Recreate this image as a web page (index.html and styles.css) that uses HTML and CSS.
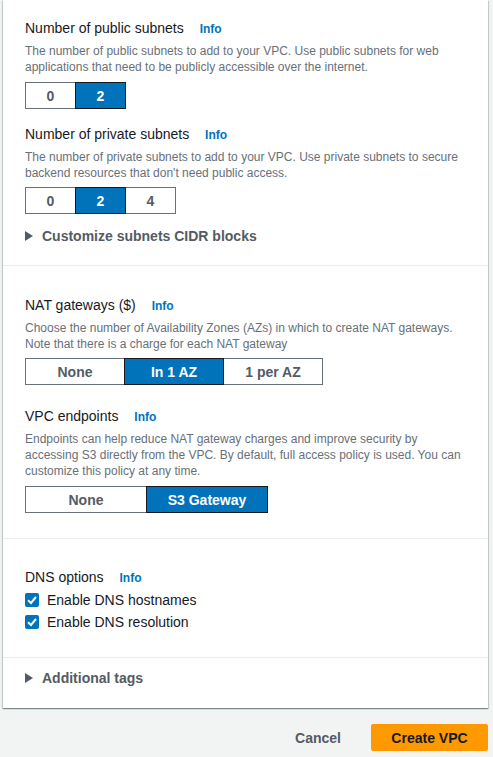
FILE: index.html
```html
<!DOCTYPE html>
<html>
<head>
<meta charset="utf-8">
<link rel="stylesheet" href="styles.css">
</head>
<body>
<div class="card">
  <div class="section s1">
    <div class="field">
      <div class="label">Number of public subnets <a class="info">Info</a></div>
      <div class="desc">The number of public subnets to add to your VPC. Use public subnets for web applications that need to be publicly accessible over the internet.</div>
      <div class="seg">
        <div class="opt w-sm">0</div>
        <div class="opt w-sm on">2</div>
      </div>
    </div>
    <div class="field f2">
      <div class="label">Number of private subnets <a class="info">Info</a></div>
      <div class="desc d2">The number of private subnets to add to your VPC. Use private subnets to secure backend resources that don't need public access.</div>
      <div class="seg sg2">
        <div class="opt w-sm">0</div>
        <div class="opt w-sm on">2</div>
        <div class="opt w-sm">4</div>
      </div>
    </div>
    <div class="expander ex1">
      <svg class="tri" width="8" height="10" viewBox="0 0 8 10"><polygon points="0,0 8,5 0,10" fill="#545b64"/></svg>
      <span>Customize subnets CIDR blocks</span>
    </div>
  </div>
  <div class="section s2">
    <div class="field">
      <div class="label">NAT gateways ($) <a class="info">Info</a></div>
      <div class="desc">Choose the number of Availability Zones (AZs) in which to create NAT gateways. Note that there is a charge for each NAT gateway</div>
      <div class="seg sg2">
        <div class="opt w-md">None</div>
        <div class="opt w-md on">In 1 AZ</div>
        <div class="opt w-md">1 per AZ</div>
      </div>
    </div>
    <div class="field f3">
      <div class="label">VPC endpoints <a class="info">Info</a></div>
      <div class="desc">Endpoints can help reduce NAT gateway charges and improve security by accessing S3 directly from the VPC. By default, full access policy is used. You can customize this policy at any time.</div>
      <div class="seg">
        <div class="opt w-lg">None</div>
        <div class="opt w-lg on">S3 Gateway</div>
      </div>
    </div>
  </div>
  <div class="section s3">
    <div class="label">DNS options <a class="info">Info</a></div>
    <label class="check">
      <span class="box"><svg width="14" height="14" viewBox="0 0 14 14"><polyline points="3,7.2 6,10 11,4" fill="none" stroke="#fff" stroke-width="2"/></svg></span>
      <span>Enable DNS hostnames</span>
    </label>
    <label class="check">
      <span class="box"><svg width="14" height="14" viewBox="0 0 14 14"><polyline points="3,7.2 6,10 11,4" fill="none" stroke="#fff" stroke-width="2"/></svg></span>
      <span>Enable DNS resolution</span>
    </label>
  </div>
  <div class="section s4">
    <div class="expander">
      <svg class="tri" width="8" height="10" viewBox="0 0 8 10"><polygon points="0,0 8,5 0,10" fill="#545b64"/></svg>
      <span>Additional tags</span>
    </div>
  </div>
</div>
<div class="footer">
  <button class="btn-link">Cancel</button>
  <button class="btn-primary">Create VPC</button>
</div>
</body>
</html>
```

FILE: styles.css
```css
* { box-sizing: border-box; }
html, body { margin: 0; padding: 0; }
body {
  background: #f2f3f3;
  font-family: "Liberation Sans", Arial, sans-serif;
  color: #16191f;
  width: 493px;
  height: 757px;
  overflow: hidden;
}
.card {
  margin-left: 3px;
  width: 485px;
  background: #fff;
  box-shadow: 0 1px 1px 0 rgba(0,28,36,.3), 1px 1px 1px 0 rgba(0,28,36,.15), -1px 1px 1px 0 rgba(0,28,36,.15);
}
.section {
  padding-left: 22px;
  padding-right: 20px;
  border-top: 1px solid #eaeded;
}
.s1 { border-top: none; padding-top: 17px; padding-bottom: 18px; }
.s2 { padding-top: 28px; padding-bottom: 25px; }
.s3 { padding-top: 27px; padding-bottom: 24px; }
.s4 { padding-top: 9px; padding-bottom: 19px; }
.label {
  font-size: 14px;
  line-height: 22px;
  color: #16191f;
}
.info {
  font-size: 12px;
  font-weight: bold;
  color: #0073bb;
  margin-left: 12px;
}
.desc {
  margin-top: 3px;
  font-size: 12px;
  line-height: 16px;
  color: #687078;
}
.seg {
  display: flex;
  margin-top: 7px;
}
.sg2 { margin-top: 6px; }
.opt {
  height: 27px;
  border: 1px solid #687078;
  background: #fff;
  color: #545b64;
  font-weight: bold;
  font-size: 14px;
  display: flex;
  align-items: center;
  justify-content: center;
}
.opt + .opt { margin-left: -1px; }
.opt.on {
  background: #0073bb;
  color: #fff;
  border-color: #16191f;
  position: relative;
}
.w-sm { width: 51px; }
.w-md { width: 100px; }
.w-lg { width: 122px; }
.f2 { margin-top: 14px; }
.f3 { margin-top: 20px; }
.expander {
  display: flex;
  align-items: center;
  height: 22px;
  font-size: 14px;
  font-weight: bold;
  color: #545b64;
}
.ex1 { margin-top: 11px; }
.tri { margin-right: 9px; flex: none; }
.check {
  display: flex;
  align-items: center;
  height: 22px;
  font-size: 14px;
  color: #16191f;
}
.box {
  width: 14px;
  height: 14px;
  border-radius: 2px;
  background: #0073bb;
  margin-right: 8px;
  display: flex;
}
.footer {
  display: flex;
  justify-content: flex-end;
  align-items: center;
  margin-top: 16px;
  padding-right: 5px;
}
.btn-link {
  background: none;
  border: none;
  font-family: inherit;
  font-size: 14px;
  font-weight: bold;
  color: #545b64;
  padding: 4px 20px;
  margin-right: 10px;
  height: 27px;
}
.btn-primary {
  font-family: inherit;
  background: #ff9900;
  border: 1px solid #ff9900;
  border-radius: 2px;
  color: #16191f;
  font-size: 14px;
  font-weight: bold;
  width: 117px;
  height: 27px;
  padding: 0;
}
```
